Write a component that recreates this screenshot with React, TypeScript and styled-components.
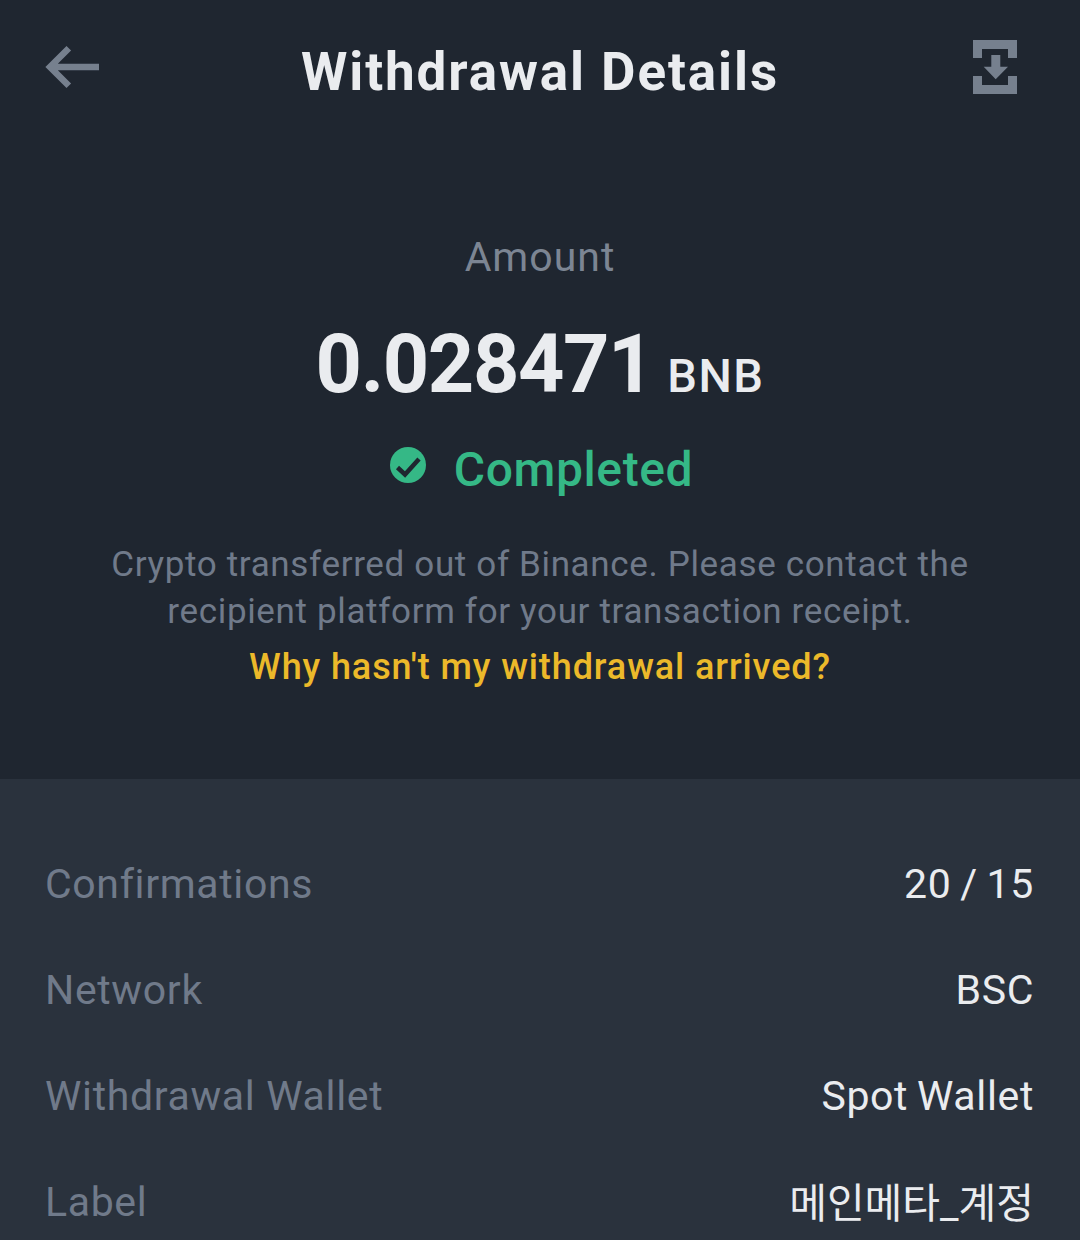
import styled, { createGlobalStyle } from "styled-components";

const GlobalStyle = createGlobalStyle`
  html, body {
    margin: 0;
    padding: 0;
    background: #2a323d;
  }
  body {
    font-family: "Roboto", "Noto Sans CJK KR", sans-serif;
  }
`;

const Page = styled.main`
  width: 1080px;
  height: 1240px;
  overflow: hidden;
  display: flex;
  flex-direction: column;
`;

const Top = styled.section`
  flex: none;
  height: 779px;
  background: #1f2630;
  display: flex;
  flex-direction: column;
  align-items: center;
`;

const Toolbar = styled.header`
  width: 100%;
  box-sizing: border-box;
  height: 136px;
  padding: 40px 45px 0;
  display: grid;
  grid-template-columns: 1fr auto 1fr;
  align-items: start;
`;

const Title = styled.h1`
  margin: 1px 0 0;
  font-size: 53px;
  line-height: 62px;
  font-weight: 700;
  letter-spacing: 1.9px;
  color: #eaecef;
`;

const BackIcon = styled.svg`
  display: block;
`;

const ExportIcon = styled.svg`
  display: block;
  justify-self: end;
  margin-right: 18px;
`;

const AmountLabel = styled.div`
  margin-top: 96px;
  font-size: 41px;
  line-height: 50px;
  letter-spacing: 1px;
  color: #7c8593;
`;

const AmountRow = styled.div`
  margin-top: 38px;
  display: flex;
  align-items: baseline;
  gap: 14px;
  color: #eaecef;
`;

const AmountValue = styled.span`
  font-size: 81px;
  line-height: 90px;
  font-weight: 700;
  letter-spacing: -1.4px;
`;

const AmountUnit = styled.span`
  font-size: 47px;
  font-weight: 500;
  letter-spacing: 1.5px;
`;

const Status = styled.div`
  margin-top: 30px;
  padding-left: 3px;
  display: flex;
  align-items: center;
  gap: 28px;
  font-size: 48px;
  font-weight: 500;
  line-height: 60px;
  letter-spacing: 0.6px;
  color: #35b886;
`;

const StatusIcon = styled.svg`
  display: block;
  margin-bottom: 10px;
`;

const Notice = styled.p`
  margin: 41px 0 0;
  width: 900px;
  text-align: center;
  font-size: 35px;
  line-height: 47px;
  letter-spacing: 0.65px;
  color: #707a8a;
`;

const HelpLink = styled.a`
  margin-top: 9px;
  font-size: 36px;
  line-height: 47px;
  font-weight: 500;
  letter-spacing: 0.9px;
  color: #ecb92a;
`;

const Details = styled.section`
  flex: 1;
  padding: 52px 46px 0 45px;
  display: flex;
  flex-direction: column;
`;

const Row = styled.div`
  flex: none;
  height: 106px;
  display: flex;
  justify-content: space-between;
  align-items: center;
  font-size: 41px;
`;

const RowLabel = styled.span`
  letter-spacing: 0.65px;
  color: #707a8a;
`;

const RowValue = styled.span<{ $cjk?: boolean }>`
  letter-spacing: ${(p) => (p.$cjk ? "0" : "0.65px")};
  word-spacing: -2px;
  margin-bottom: ${(p) => (p.$cjk ? "4px" : "0")};
  color: #eaecef;
`;

const rows = [
  { label: "Confirmations", value: "20 / 15" },
  { label: "Network", value: "BSC" },
  { label: "Withdrawal Wallet", value: "Spot Wallet" },
  { label: "Label", value: "메인메타_계정", cjk: true },
];

function App() {
  return (
    <>
      <GlobalStyle />
      <Page>
        <Top>
          <Toolbar>
            <BackIcon width="56" height="54" viewBox="0 0 56 54" fill="none">
              <path d="M54 27H6M23.800 8.300L5 27l18.800 18.800" stroke="#76808e" strokeWidth="6.500" />
            </BackIcon>
            <Title>Withdrawal Details</Title>
            <ExportIcon width="44" height="54" viewBox="0 0 44 54" fill="#76808e">
              <path d="M0 0h44v18h-9V9H9v9H0zM0 36h9v9h26v-9h9v18H0zM18.300 15h9v11.700H35L22.700 39.300 10.700 26.700h7.600z" />
            </ExportIcon>
          </Toolbar>
          <AmountLabel>Amount</AmountLabel>
          <AmountRow>
            <AmountValue>0.028471</AmountValue>
            <AmountUnit>BNB</AmountUnit>
          </AmountRow>
          <Status>
            <StatusIcon width="36" height="36" viewBox="0 0 36 36">
              <circle cx="18" cy="18" r="18" fill="#35b886" />
              <path d="M7.500 20.500l7.500 7L29 12" stroke="#1f2630" strokeWidth="4.500" fill="none" />
            </StatusIcon>
            Completed
          </Status>
          <Notice>
            Crypto transferred out of Binance. Please contact the recipient platform for your transaction receipt.
          </Notice>
          <HelpLink>Why hasn't my withdrawal arrived?</HelpLink>
        </Top>
        <Details>
          {rows.map((row) => (
            <Row key={row.label}>
              <RowLabel>{row.label}</RowLabel>
              <RowValue $cjk={row.cjk}>{row.value}</RowValue>
            </Row>
          ))}
        </Details>
      </Page>
    </>
  );
}

export default App;
